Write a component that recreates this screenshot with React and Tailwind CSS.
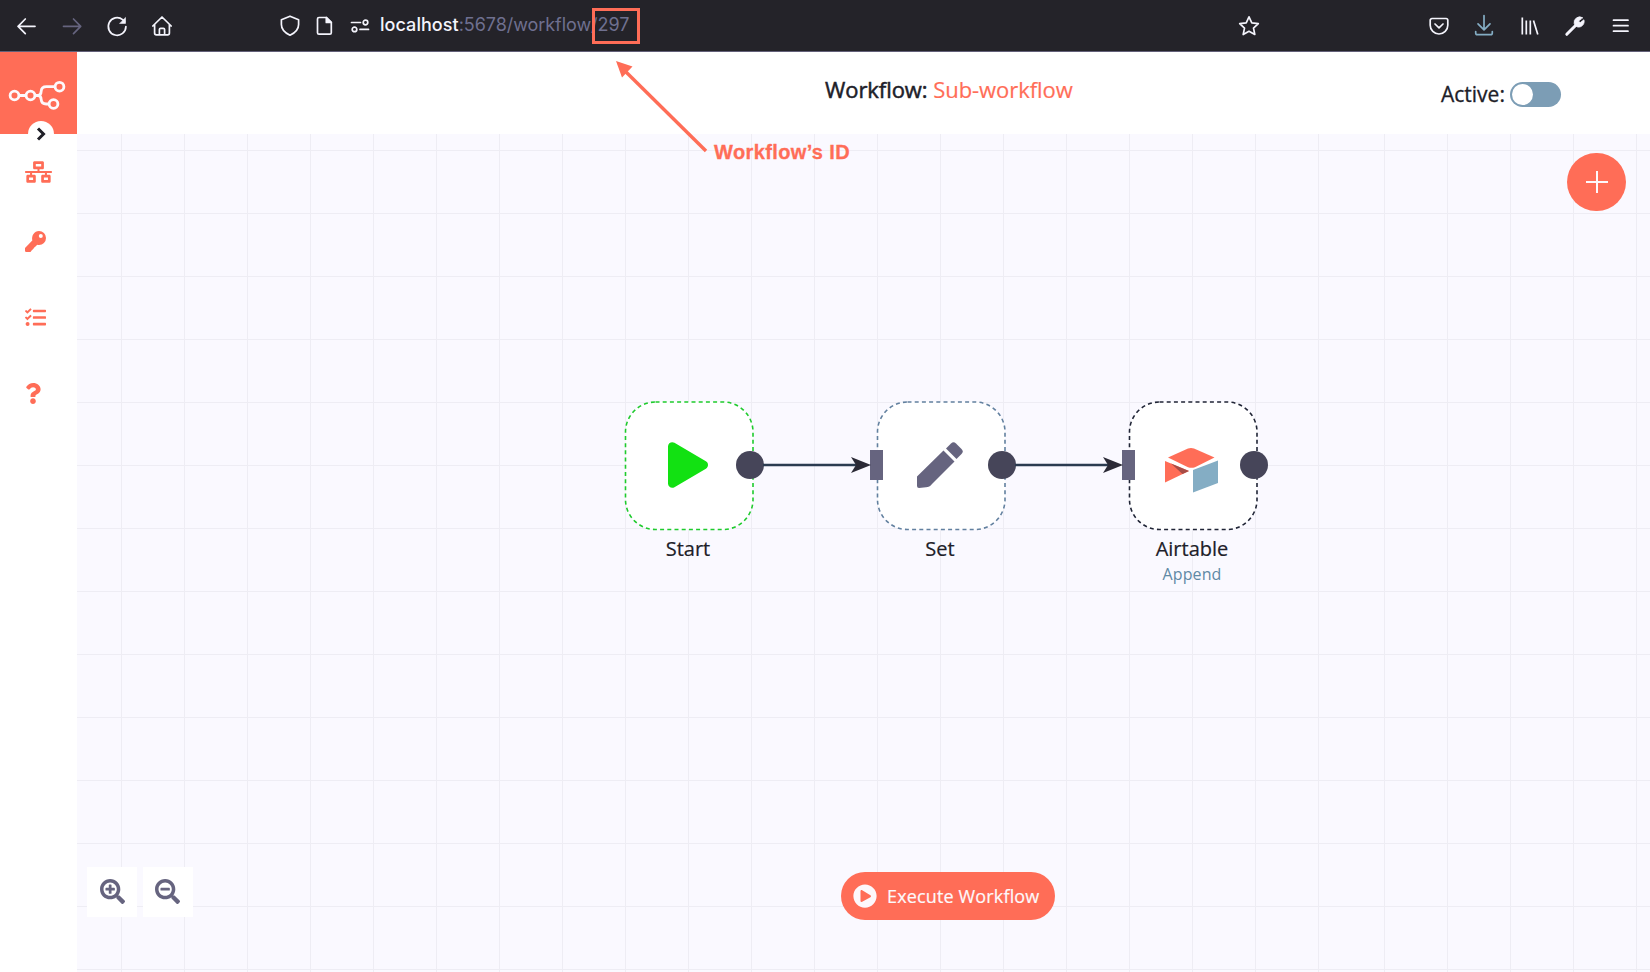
import React from 'react';
import { FaNetworkWired, FaTasks, FaQuestion, FaSearchPlus, FaSearchMinus, FaPlay, FaPlayCircle } from 'react-icons/fa';

const V_LINES = [
  ...Array.from({ length: 20 }, (_, i) => 121.5 + 63 * i),
  1384.5, 1447.5, 1510.5, 1573.5, 1636.5,
];
const H_LINES = Array.from({ length: 14 }, (_, i) => 150.5 + 63 * i);

function Icon({ children, className = '', width = 24, height = 24, viewBox = '0 0 24 24' }) {
  return (
    <svg width={width} height={height} viewBox={viewBox} fill="none" stroke="currentColor" strokeWidth="1.7" strokeLinecap="round" strokeLinejoin="round" className={'shrink-0 ' + className}>
      {children}
    </svg>
  );
}

function BrowserBar() {
  return (
    <div className="flex h-[52px] shrink-0 items-center border-b border-[#636079] bg-[#242329] text-[#f4f4fc]">
      <Icon className="ml-[15px]"><path d="M20 12.3H3M10.3 5l-7.2 7.3 7.2 7.3" /></Icon>
      <Icon className="ml-[21px] text-[#66647f]"><path d="M3.5 12.3h17M13.5 5l7.2 7.3-7.2 7.3" /></Icon>
      <Icon className="ml-[21px]">
        <path d="M20.9 12.5A8.8 8.8 0 1 1 17.6 5.6L19.5 7.4" />
        <path d="M20.5 3.8V9.4H14.9Z" fill="currentColor" strokeWidth="0.6" />
      </Icon>
      <Icon className="ml-[21px]">
        <path d="M2.8 12L12 3l9.2 9M4.600 10.600V19a1.800 1.800 0 0 0 1.800 1.800h11.200a1.800 1.800 0 0 0 1.800-1.800v-8.400M9.400 20.600v-5a1.200 1.200 0 0 1 1.200-1.200h2.800a1.200 1.200 0 0 1 1.200 1.200v5" />
      </Icon>
      <Icon className="ml-[104px]"><path d="M12 2.200l8.600 3.600v4.600c0 4.800-3.200 8.200-8.600 10.800-5.400-2.600-8.600-6-8.600-10.800V5.800z" /></Icon>
      <Icon className="ml-[10px]">
        <path d="M7 3.500h7.500l4.800 4.800V18.700a1.500 1.500 0 0 1-1.500 1.500H7a1.500 1.500 0 0 1-1.500-1.500V5a1.500 1.500 0 0 1 1.500-1.500z" />
        <path d="M14.300 3.500v5h5z" fill="currentColor" />
      </Icon>
      <Icon className="ml-[14px]" width="20" height="14" viewBox="0 0 20 14">
        <path d="M1.500 3.500h9M10 10.400h8.500" />
        <circle cx="15.500" cy="3.500" r="2.300" />
        <circle cx="4.500" cy="10.400" r="2.300" />
      </Icon>
      <div className="relative ml-[10px] flex h-[52px] w-[262px] items-center whitespace-nowrap pb-[3px] font-['Inter',sans-serif] text-[18px] text-[#6f7090]">
        <span className="font-medium tracking-[0.05px] text-[#f4f4fc]">localhost</span>
        <span className="tracking-[-0.06px]">:5678/workflow/297</span>
        <div className="absolute left-[212px] top-[8px] h-[36px] w-[48px] border-3 border-[#ff6d57]" />
      </div>
      <Icon className="ml-[595px]"><path d="M12 2.800l2.800 6 6.500.8-4.800 4.500 1.300 6.400-5.800-3.200-5.800 3.200 1.300-6.400L2.700 9.600l6.500-.8z" /></Icon>
      <Icon className="ml-[166px]">
        <path d="M5 4.500h14a1.800 1.800 0 0 1 1.800 1.800v4.900a8.800 8.800 0 0 1-17.600 0V6.300A1.800 1.800 0 0 1 5 4.500z" />
        <path d="M8 10l4 3.800 4-3.800" />
      </Icon>
      <Icon className="ml-[21px] text-[#84adc4]"><path d="M12 1.500v14M6 9.800l6 6 6-6M3.700 17.500v1.500a1.700 1.700 0 0 0 1.700 1.700h13.200a1.700 1.700 0 0 0 1.700-1.700v-1.500" /></Icon>
      <Icon className="ml-[22px]"><path d="M4.300 3.500v17M8.300 6.500v14M12.300 6.500v14M15.500 6.500l4.300 14" strokeLinecap="butt" /></Icon>
      <Icon className="ml-[21px]">
        <path d="M3.800 20.300l9-9" strokeWidth="3" />
        <path d="M19.500 3.600A5.600 5.600 0 0 0 11.200 9.500 5 5 0 0 0 14.700 13 5.600 5.600 0 0 0 20.900 5.800L17.300 8.600 15.600 7.300z" fill="currentColor" strokeWidth="0.800" />
      </Icon>
      <Icon className="ml-[22px]"><path d="M4.500 6.200h14.500M4.500 11.700h14.500M4.500 17.200h14.500" /></Icon>
    </div>
  );
}

function Sidebar() {
  return (
    <aside className="flex w-[77px] shrink-0 flex-col bg-white text-[#ff6d57]">
      <div className="relative h-[82px] bg-[#ff6d57]">
        <svg width="77" height="82" viewBox="0 0 77 82" fill="none" stroke="#fdf8fb" strokeWidth="2.800">
          <circle cx="14.500" cy="43.500" r="4.400" />
          <circle cx="30.500" cy="43.500" r="4.400" />
          <circle cx="59.500" cy="34.700" r="4.400" />
          <circle cx="53.500" cy="52" r="4.400" />
          <path d="M19 43.500h7M35 43.500h4M55 34.700h-8.500q-5 0-5.300 4.500-.3 4.300-3 4.300 2.700 0 3 4.200.3 4.300 5 4.300h3" />
        </svg>
        <div className="absolute left-[28px] top-[69px] flex size-[26px] items-center justify-center rounded-full bg-white">
          <svg width="10" height="14" viewBox="0 0 10 14" fill="none" stroke="#202028" strokeWidth="3"><path d="M2 1.500L7.500 7 2 12.500" /></svg>
        </div>
      </div>
      <nav className="flex flex-col pl-[25px]">
        <FaNetworkWired className="mt-[27px] h-[22px] w-[27px]" />
        <svg viewBox="0 0 21 21" className="mt-[48px] size-[21px]" fill="currentColor">
          <path fillRule="evenodd" d="M14 0A7 7 0 0 1 21 7a7 7 0 0 1-7 7c-.8 0-1.300 0-1.800-.2L10.800 15.300 9.500 16.200 8.200 18 6.800 19.300 5.500 21H1.200A1.200 1.200 0 0 1 0 19.800V17L7.300 9.400C6.300 4.700 9.300 0 14 0zM15.800 3a2 2 0 1 0 0 4 2 2 0 0 0 0-4z" />
        </svg>
        <FaTasks className="mt-[55px] size-[21px]" />
        <FaQuestion className="mt-[55px] h-[21px] w-[16px]" />
      </nav>
    </aside>
  );
}

function Header() {
  return (
    <header className="flex h-[82px] shrink-0 items-start bg-white font-['Open_Sans',sans-serif] text-[#202028]">
      <h1 className="ml-[748px] mt-[22px] w-[250px] whitespace-nowrap text-[22px] leading-[30px] tracking-[-0.06px] [-webkit-text-stroke:0.2px]">
        <span className="[-webkit-text-stroke:0.5px]">Workflow:</span> <span className="text-[#ff6d57]">Sub-workflow</span>
      </h1>
      <div className="ml-[366px] mt-[27px] flex items-center">
        <span className="w-[69px] whitespace-nowrap text-[21px] leading-[30px] [-webkit-text-stroke:0.3px]">Active:</span>
        <div className="mt-[1px] flex h-[25px] w-[51px] items-center rounded-full bg-[#7c9db5] pl-[2px]">
          <div className="size-[21px] rounded-full bg-white" />
        </div>
      </div>
    </header>
  );
}

const NODES = [
  { x: 547, name: 'Start', color: '#1fcb2d', input: false },
  { x: 799, name: 'Set', color: '#62809f', input: true },
  { x: 1051, name: 'Airtable', sub: 'Append', color: '#202536', input: true },
];

function NodeIcon({ name }) {
  if (name === 'Start') return <FaPlay className="h-[46px] w-[40px] text-[#12e112]" />;
  if (name === 'Set') {
    return (
      <svg width="46" height="46" viewBox="0 0 46 46" fill="#66647f">
        <path d="M26.500 8.500L37.500 19.500 15 42Q12.500 45.300 9 45.300L2 46Q0 46 0 44V34.500z" />
        <path d="M29 6.500L34 1.500Q36.500-.8 39 1.500L44.500 7Q47 9.500 44.500 12L39.500 17z" />
      </svg>
    );
  }
  return (
    <svg width="54" height="46" viewBox="0 0 54 46" className="relative -left-[1px] mt-[9px]">
      <path d="M4 10.500L24 1.600q3-1 6 0L50.500 10.500 31 20.200q-3.500 1.200-7 0z" fill="#ff6d57" />
      <path d="M1 14L25 24 1 35.500z" fill="#ff6d57" />
      <path d="M7 16.500L25 24 18.500 27z" fill="#a74c46" />
      <path d="M29 23L54 13.500V36L29 45.500z" fill="#84adc4" />
    </svg>
  );
}

function Node({ node }) {
  return (
    <div className="absolute top-[267px] flex w-[130px] flex-col items-center font-['Open_Sans',sans-serif]" style={{ left: node.x }}>
      <div className="relative flex size-[130px] items-center justify-center">
        <svg width="130" height="130" className="absolute inset-0">
          <rect x="1.500" y="1" width="127.500" height="127.500" rx="30" fill="white" stroke={node.color} strokeWidth="1.600" strokeDasharray="4 3.200" />
        </svg>
        <div className="relative -left-[1px] -top-[1px]"><NodeIcon name={node.name} /></div>
        <div className="absolute left-[112px] top-[50px] size-[28px] rounded-full bg-[#464559]" />
        {node.input && <div className="absolute -left-[6px] top-[49px] h-[30px] w-[13px] bg-[#66647f]" />}
      </div>
      <div className="relative -left-[1px] mt-[4px] text-[20px] leading-[28px] text-[#202028] [-webkit-text-stroke:0.2px]">{node.name}</div>
      {node.sub && <div className="relative -left-[1px] text-[16px] leading-[23px] tracking-[0.1px] text-[#6089a5]">{node.sub}</div>}
    </div>
  );
}

function Wire({ className }) {
  return (
    <svg width="110" height="20" viewBox="0 0 110 20" className={'absolute top-[321px] ' + className}>
      <path d="M0 10h96" stroke="#2b3b50" strokeWidth="2.600" />
      <path d="M88 2L108 10 88 18 93 10z" fill="#2b2a36" />
    </svg>
  );
}

function Canvas() {
  return (
    <main className="relative flex flex-1 flex-col justify-end overflow-hidden bg-[#faf9ff]">
      <svg width="1573" height="838" viewBox="77 134 1573 838" className="absolute inset-0">
        <g stroke="#eeedf4" strokeWidth="1">
          {V_LINES.map((x) => <line key={x} x1={x} x2={x} y1="134" y2="972" />)}
          {H_LINES.map((y) => <line key={y} x1="77" x2="1650" y1={y} y2={y} />)}
        </g>
      </svg>
      {NODES.map((n) => <Node key={n.name} node={n} />)}
      <Wire className="left-[686px]" />
      <Wire className="left-[938px]" />
      <button className="absolute left-[1490px] top-[19px] flex h-[58px] w-[59px] items-center justify-center rounded-full bg-[#ff6d57]">
        <svg width="22" height="22" viewBox="0 0 22 22" stroke="#fdf8fb" strokeWidth="2"><path d="M11 0v22M0 11h22" /></svg>
      </button>
      <div className="relative flex h-[105px] items-start pl-[10px] text-[#66647f]">
        <button className="flex size-[50px] items-center justify-center bg-white pb-[1px]"><FaSearchPlus className="size-[25px]" /></button>
        <button className="ml-[6px] flex size-[50px] items-center justify-center bg-white pb-[1px] pr-[2px]"><FaSearchMinus className="size-[25px]" /></button>
        <button className="ml-[648px] mt-[5px] flex h-[48px] w-[214px] items-center whitespace-nowrap rounded-full bg-[#ff6d57] pl-[12px] font-['Open_Sans',sans-serif] text-[18px] tracking-[0.15px] text-[#fdf8fb]">
          <FaPlayCircle className="mr-[10px] size-[24px] shrink-0" />
          <span className="mt-[1px] [-webkit-text-stroke:0.2px]">Execute Workflow</span>
        </button>
      </div>
    </main>
  );
}

export default function App() {
  return (
    <div className="relative flex h-[972px] w-[1650px] flex-col overflow-hidden bg-white">
      <BrowserBar />
      <div className="flex min-h-0 flex-1">
        <Sidebar />
        <div className="flex min-w-0 flex-1 flex-col">
          <Header />
          <Canvas />
        </div>
      </div>
      <svg width="96" height="96" viewBox="0 0 96 96" className="absolute left-[614px] top-[59px]">
        <path d="M11 12L92 92" stroke="#ff6d57" strokeWidth="3.400" />
        <path d="M2 2l16.500 5.500L8 18.500z" fill="#ff6d57" />
      </svg>
      <div className="absolute left-[714px] top-[139px] whitespace-nowrap font-['Liberation_Sans',sans-serif] text-[20px] font-bold leading-[26px] tracking-[0.38px] text-[#ff6d57] [-webkit-text-stroke:0.3px]">Workflow’s ID</div>
    </div>
  );
}
